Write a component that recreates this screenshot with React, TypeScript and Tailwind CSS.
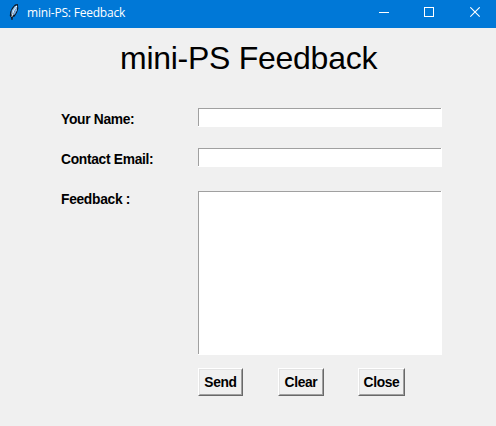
import React from 'react';

function Feather() {
  return (
    <svg width="10" height="17" viewBox="0 0 10 17" className="shrink-0">
      <path d="M8.8 0 L6 0.6 L3 4 L1.2 8 L0.8 12 L2 13.2 L2.5 16 L3.5 16 L3.9 13 L5.7 12.5 L8 8.5 L9.3 4.5 Z" fill="#0b1420" />
      <path d="M8.2 1 L5.5 2.5 L2.8 6.5 L2 11.5 L4.3 8 Z" fill="#8cc4f4" />
      <path d="M8.3 1.5 L8 6.2 L6 10.2 L3.8 11.6 L5.5 7 Z" fill="#75aeea" />
      <path d="M7.8 2 L4.8 7 L2.8 12.8" stroke="#f4faff" strokeWidth="1" fill="none" />
    </svg>
  );
}

function TitleBar() {
  return (
    <header className="flex h-7 w-full bg-[#0078d7] text-white">
      <div className="flex flex-1 items-start pl-[9px] pt-1">
        <Feather />
        <span className="ml-2 whitespace-nowrap font-['Open_Sans','Noto_Sans',sans-serif] text-[12px] leading-[18px] tracking-[-0.2px]">
          mini-PS: Feedback
        </span>
      </div>
      <div className="flex pr-[15px] pt-[7px]">
        <svg width="11" height="11" viewBox="0 0 11 11" shapeRendering="crispEdges">
          <path d="M0 5.5H10" stroke="white" />
        </svg>
        <svg width="11" height="11" viewBox="0 0 11 11" className="ml-[34px]" shapeRendering="crispEdges">
          <rect x="0.5" y="0.5" width="9" height="9" fill="none" stroke="white" />
        </svg>
        <svg width="11" height="11" viewBox="0 0 11 11" className="ml-[35px]">
          <path d="M0.3 0.3L9.7 9.7M9.7 0.3L0.3 9.7" stroke="white" strokeWidth="1.1" />
        </svg>
      </div>
    </header>
  );
}

function SunkenField({ className }: { className: string }) {
  return (
    <div className={`w-[244px] border-b border-r border-white bg-white ${className}`}>
      <div className="h-full border-l border-t border-[#a0a0a0]" />
    </div>
  );
}

function RaisedButton({ label, className }: { label: string; className: string }) {
  return (
    <button
      className={`block h-7 border-b border-l border-r border-t border-b-[#696969] border-l-white border-r-[#696969] border-t-white ${className}`}
    >
      <span className="flex h-full items-center justify-center whitespace-nowrap border border-b-[#a0a0a0] border-l-[#e3e3e3] border-r-[#a0a0a0] border-t-[#e3e3e3] pt-0.5 text-[13.8px] font-bold leading-4 tracking-[-0.35px]">
        {label}
      </span>
    </button>
  );
}

export default function App() {
  return (
    <div className="h-[426px] w-[496px] overflow-hidden bg-[#f0f0f0] font-['Liberation_Sans',Arial,sans-serif] text-black">
      <TitleBar />
      <h1 className="ml-[120px] mt-[11px] whitespace-nowrap text-[32px] leading-[38px] tracking-[-0.27px]">mini-PS Feedback</h1>
      <main className="mt-[31px] grid grid-cols-[137px_244px] grid-rows-[40px_43px_177px_28px] pl-[61px] text-[13.8px] font-bold leading-4 tracking-[-0.3px]">
        <label className="pt-1">Your Name:</label>
        <SunkenField className="h-[19px]" />
        <label className="pt-1">Contact Email:</label>
        <SunkenField className="h-[19px]" />
        <label className="pt-px">Feedback :</label>
        <SunkenField className="h-[164px]" />
        <div className="col-start-2 flex">
          <RaisedButton label="Send" className="w-[45px]" />
          <RaisedButton label="Clear" className="ml-[35px] w-[46px]" />
          <RaisedButton label="Close" className="ml-[34px] w-[47px]" />
        </div>
      </main>
    </div>
  );
}
